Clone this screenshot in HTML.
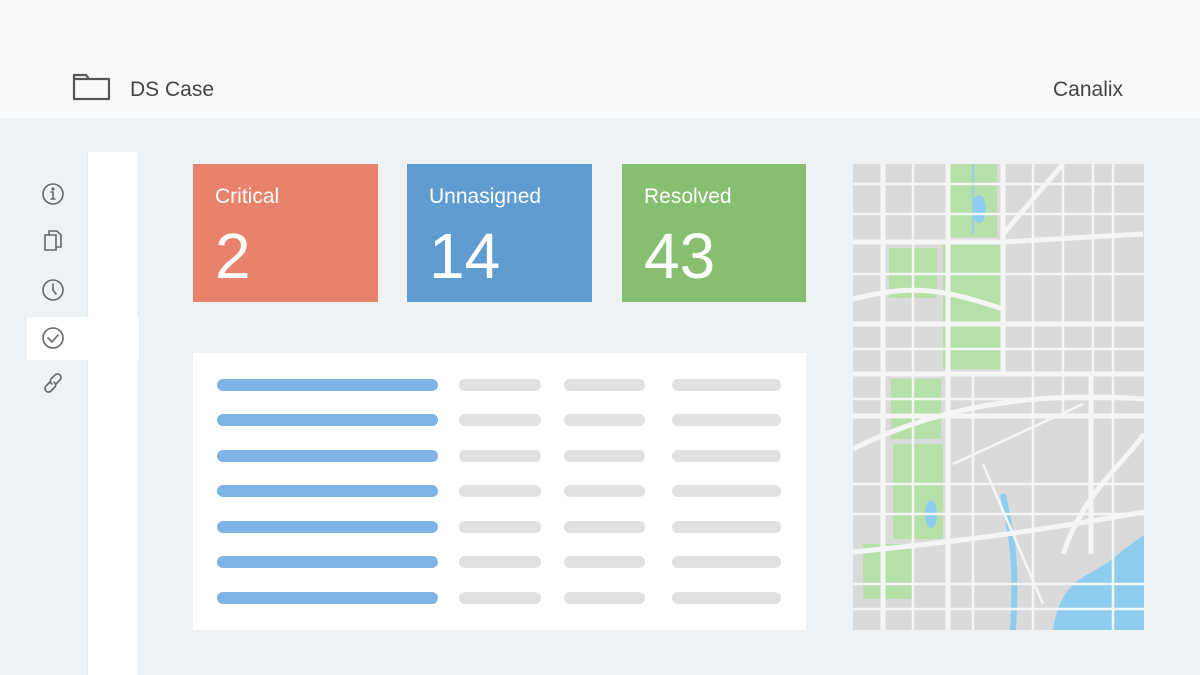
<!DOCTYPE html>
<html><head><style>
*{margin:0;padding:0;box-sizing:border-box}
body{width:1200px;height:675px;overflow:hidden;background:#eff2f5;font-family:"Liberation Sans",sans-serif;position:relative}
.hdr{position:absolute;left:0;top:0;width:1200px;height:118px;background:#f9fafb}
.t{position:absolute;color:#444;font-size:21px}
.card{position:absolute;top:164px;height:138px;width:185px;color:#fff}
.card .l{position:absolute;left:22px;top:21px;font-size:21px}
.card .n{position:absolute;left:22px;top:56px;font-size:64px;line-height:72px}
.bar{position:absolute;height:12px;border-radius:6px}
.b{background:#7db3e6;left:217px;width:221px}
.g{background:#e1e1e1}
</style></head><body>
<div class="hdr"></div>
<svg style="position:absolute;left:72px;top:72px" width="40" height="30" viewBox="0 0 40 30"><path d="M2 3h12l3 4h20v20H2z M2 7h15" fill="none" stroke="#555" stroke-width="2.2" stroke-linejoin="round"/></svg>
<div class="t" style="left:130px;top:78px">DS Case</div>
<div class="t" style="left:1053px;top:78px">Canalix</div>
<div style="position:absolute;left:87px;top:152px;width:52px;height:523px;background:#fff;border-left:1px solid #e6e8eb;border-right:1px solid #e6e8eb"></div>
<div style="position:absolute;left:27px;top:317px;width:112px;height:43px;background:#fff"></div>
<svg style="position:absolute;left:40px;top:180px" width="28" height="220" viewBox="0 0 28 220" fill="none" stroke="#666" stroke-width="1.6" stroke-linecap="round">
<circle cx="13" cy="14" r="10"/><path d="M13 12v7M11 19h4M11 12h2"/><circle cx="13" cy="9" r="0.8" fill="#666"/>
<path d="M5 55h11v15H5z"/><path d="M9 55v-4h8l4 4v12h-5"/>
<circle cx="13" cy="110" r="10"/><path d="M13 104v6l3 4"/>
<circle cx="13" cy="158" r="10"/><path d="M8 158l4 4 6-7"/>
<path d="M10 202l-4 4a3.5 3.5 0 0 0 5 5l4-4a3.5 3.5 0 0 0 -1-5M16 204l4-4a3.5 3.5 0 0 0 -5-5l-4 4a3.5 3.5 0 0 0 1 5"/>
</svg>
<div class="card" style="left:193px;background:#e8826a"><div class="l">Critical</div><div class="n">2</div></div>
<div class="card" style="left:407px;background:#5f9cd0"><div class="l">Unnasigned</div><div class="n">14</div></div>
<div class="card" style="left:622px;width:184px;background:#86bf70"><div class="l">Resolved</div><div class="n">43</div></div>
<div style="position:absolute;left:193px;top:353px;width:613px;height:277px;background:#fff"></div>
<div id="rows"></div>
<script>
var h='';var ys=[379,414,450,485,521,556,592];
ys.forEach(function(y){h+='<div class="bar b" style="top:'+y+'px"></div><div class="bar g" style="top:'+y+'px;left:459px;width:82px"></div><div class="bar g" style="top:'+y+'px;left:564px;width:81px"></div><div class="bar g" style="top:'+y+'px;left:672px;width:109px"></div>';});
document.getElementById('rows').innerHTML=h;
</script>
<svg style="position:absolute;left:853px;top:164px" width="291" height="466" viewBox="0 0 291 466">
<rect width="291" height="466" fill="#dadada"/>
<path d="M97 0h47v73H97z M36 84h48v50H36z M90 80h60v125H90z M38 215h50v60H38z M40 280h50v95H40z M10 380h50v55H10z" fill="#b5e1a8"/>
<path d="M120 0v70" stroke="#9ccbee" stroke-width="2"/>
<ellipse cx="126" cy="45" rx="7" ry="14" fill="#8ecdf0"/>
<ellipse cx="78" cy="350" rx="6" ry="14" fill="#8ecdf0"/>
<path d="M200 466c10-60 40-50 70-80l21-15v95z" fill="#8ecdf0"/>
<path d="M150 330c5 30 15 50 10 136" stroke="#8ecdf0" stroke-width="6" fill="none"/>
<g stroke="#f5f5f5" stroke-width="5" fill="none">
<path d="M0 78h150l140-8M0 135c60-15 90-10 150 10M0 210h291M0 285c60-30 150-60 291-50M0 388c100-10 180-20 291-40M30 0v466M95 0v466M150 0v210M150 70l60-70M238 210v180M0 160h291M0 252h291M210 390c20-60 60-90 81-120"/>
</g>
<g stroke="#f5f5f5" stroke-width="2.5" fill="none">
<path d="M0 20h291M0 50h291M0 110h291M0 185h291M0 235h291M0 320h291M0 350h291M0 420h291M0 445h291M60 0v466M120 210v256M180 0v466M210 0v250M260 0v466M240 0v210M130 300l60 140M100 300l130-60"/>
</g>
</svg>
</body></html>
